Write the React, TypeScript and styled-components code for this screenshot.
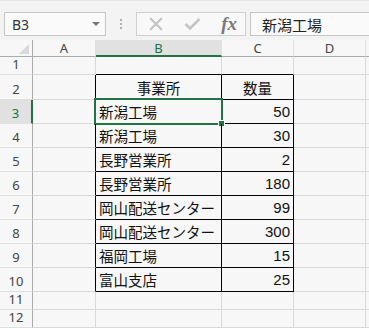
import React from "react";
import styled, { createGlobalStyle } from "styled-components";

const GREEN = "#217346";
const GRID = "#d9d9d9";
const HEAD_LINE = "#ababab";

const Global = createGlobalStyle`
	html, body {
		margin: 0;
		padding: 0;
		background: #f7f7f7;
		overflow: hidden;
	}
	#root {
		width: 369px;
		height: 328px;
		overflow: hidden;
	}
`;

const Janela = styled.div`
	width: 369px;
	height: 328px;
	display: flex;
	flex-direction: column;
	background: #f7f7f7;
	font-family: "Noto Sans CJK JP", "Noto Sans", sans-serif;
`;

const BarraFormula = styled.div`
	height: 45px;
	box-sizing: border-box;
	display: flex;
	align-items: flex-start;
	padding: 11px 0 0 4px;
	background: #f3f3f3;
	border-top: 1px solid #e6e6e6;
`;

const CaixaNome = styled.div`
	width: 102px;
	height: 24px;
	box-sizing: border-box;
	border: 1px solid #c6c6c6;
	background: #fafafa;
	display: flex;
	align-items: center;
	justify-content: space-between;
	padding: 0 5px 0 7px;
	font-family: "Noto Sans", sans-serif;
	font-size: 14px;
	color: #333;
`;

const Seta = styled.span`
	width: 0;
	height: 0;
	border-left: 4px solid transparent;
	border-right: 4px solid transparent;
	border-top: 4px solid #777;
`;

const Pontos = styled.div`
	width: 30px;
	height: 24px;
	display: flex;
	flex-direction: column;
	align-items: center;
	justify-content: center;
	gap: 2px;
	& span {
		width: 2px;
		height: 2px;
		background: #b0b0b0;
	}
`;

const Botoes = styled.div`
	width: 110px;
	height: 24px;
	box-sizing: border-box;
	border: 1px solid #d0d0d0;
	background: #f8f8f8;
	display: flex;
	align-items: center;
	justify-content: space-between;
	padding: 0 8px 0 11px;
`;

const Fx = styled.span`
	font-family: "Liberation Serif", serif;
	font-style: italic;
	font-weight: bold;
	font-size: 19px;
	color: #7a7a7a;
	line-height: 1;
	margin-top: -2px;
`;

const Entrada = styled.div`
	flex: 1;
	margin-left: 4px;
	height: 24px;
	box-sizing: border-box;
	border: 1px solid #c6c6c6;
	border-right: none;
	background: #fafafa;
	display: flex;
	align-items: center;
	padding-left: 11px;
	font-size: 15px;
	color: #222;
`;

const Grade = styled.div`
	display: grid;
	grid-template-columns: 33px 63px 126px 72px 72px 1fr;
	grid-template-rows: 17px 18px 25px repeat(8, 24px) 18px 18px;
`;

const Cabecalho = styled.div<{ $ativo?: boolean; $ultimo?: boolean }>`
	box-sizing: border-box;
	display: flex;
	align-items: center;
	justify-content: center;
	background: ${(p) => (p.$ativo ? "#e1e1e1" : "#f7f7f7")};
	border-right: 1px solid ${(p) => (p.$ultimo ? "transparent" : "#e0e0e0")};
	border-bottom: ${(p) => (p.$ativo ? `2px solid ${GREEN}` : `1px solid ${HEAD_LINE}`)};
	font-family: "Noto Sans", sans-serif;
	font-size: 13px;
	color: ${(p) => (p.$ativo ? GREEN : "#444")};
`;

const Canto = styled.div`
	box-sizing: border-box;
	display: flex;
	align-items: flex-end;
	justify-content: flex-end;
	padding: 0 3px 2px 0;
	border-right: 1px solid ${HEAD_LINE};
	border-bottom: 1px solid ${HEAD_LINE};
	& span {
		width: 0;
		height: 0;
		border-left: 10px solid transparent;
		border-bottom: 10px solid #dadada;
	}
`;

const NumeroLinha = styled.div<{ $ativo?: boolean }>`
	box-sizing: border-box;
	display: flex;
	align-items: flex-end;
	justify-content: center;
	padding-bottom: 1px;
	background: ${(p) => (p.$ativo ? "#e1e1e1" : "#f7f7f7")};
	border-right: ${(p) => (p.$ativo ? `2px solid ${GREEN}` : `1px solid ${HEAD_LINE}`)};
	border-bottom: 1px solid #e0e0e0;
	font-family: "Noto Sans", sans-serif;
	font-size: 13px;
	color: ${(p) => (p.$ativo ? GREEN : "#444")};
`;

const Celula = styled.div<{ $direita: string; $baixo: string; $alinhar: string }>`
	position: relative;
	box-sizing: border-box;
	display: flex;
	align-items: flex-end;
	justify-content: ${(p) => p.$alinhar};
	padding: 0 3px 1px 3px;
	border-right: 1px solid ${(p) => p.$direita};
	border-bottom: 1px solid ${(p) => p.$baixo};
	font-size: 14.5px;
	line-height: 21px;
	color: #111;
	white-space: nowrap;
	overflow: visible;
	z-index: ${(p) => (p.$alinhar === "flex-start" ? 1 : 0)};
`;

const Numero = styled.span`
	font-family: "Liberation Sans", sans-serif;
	font-size: 15px;
`;

const Selecao = styled.div`
	position: absolute;
	left: -2px;
	top: -2px;
	right: -2px;
	bottom: -2px;
	border: 2px solid ${GREEN};
	pointer-events: none;
	&::after {
		content: "";
		position: absolute;
		right: -4px;
		bottom: -4px;
		width: 5px;
		height: 5px;
		background: ${GREEN};
		border: 1px solid #fff;
	}
`;

// a coluna E só aparece como uma faixa estreita, sem letra visível
const colunas = ["A", "B", "C", "D", ""];

const dados: Record<number, [string, string]> = {
	2: ["事業所", "数量"],
	3: ["新潟工場", "50"],
	4: ["新潟工場", "30"],
	5: ["長野営業所", "2"],
	6: ["長野営業所", "180"],
	7: ["岡山配送センター", "99"],
	8: ["岡山配送センター", "300"],
	9: ["福岡工場", "15"],
	10: ["富山支店", "25"],
};

const emTabela = (r: number, c: number) => r >= 2 && r <= 10 && (c === 1 || c === 2);

const IconeX = () => (
	<svg width="16" height="16" viewBox="0 0 16 16">
		<path d="M2 2 L14 14 M14 2 L2 14" stroke="#c4c4c4" strokeWidth="2" fill="none" />
	</svg>
);

const IconeCheck = () => (
	<svg width="17" height="14" viewBox="0 0 17 14">
		<path d="M1.5 7 L6 11.5 L15.5 2" stroke="#c4c4c4" strokeWidth="2.6" fill="none" />
	</svg>
);

const App = () => {
	const linhas = Array.from({ length: 12 }, (_, i) => i + 1);

	return (
		<Janela>
			<Global />
			<BarraFormula>
				<CaixaNome>
					B3
					<Seta />
				</CaixaNome>
				<Pontos>
					<span />
					<span />
					<span />
				</Pontos>
				<Botoes>
					<IconeX />
					<IconeCheck />
					<Fx>fx</Fx>
				</Botoes>
				<Entrada>新潟工場</Entrada>
			</BarraFormula>

			<Grade>
				<Canto>
					<span />
				</Canto>
				{colunas.map((c, i) => (
					<Cabecalho key={i} $ativo={c === "B"} $ultimo={i === colunas.length - 1}>
						{c}
					</Cabecalho>
				))}

				{linhas.map((r) => (
					<React.Fragment key={r}>
						<NumeroLinha $ativo={r === 3}>{r}</NumeroLinha>
						{colunas.map((_, c) => {
							const direita = emTabela(r, c) || emTabela(r, c + 1) ? "#000" : GRID;
							const baixo = emTabela(r, c) || emTabela(r + 1, c) ? "#000" : GRID;
							const linha = dados[r];
							let conteudo: React.ReactNode = null;
							let alinhar = "flex-start";
							if (linha && c === 1) {
								conteudo = linha[0];
								if (r === 2) alinhar = "center";
							}
							if (linha && c === 2) {
								alinhar = r === 2 ? "center" : "flex-end";
								conteudo = r === 2 ? linha[1] : <Numero>{linha[1]}</Numero>;
							}
							return (
								<Celula key={c} $direita={direita} $baixo={baixo} $alinhar={alinhar}>
									{conteudo}
									{r === 3 && c === 1 && <Selecao />}
								</Celula>
							);
						})}
					</React.Fragment>
				))}
			</Grade>
		</Janela>
	);
};

export default App;
